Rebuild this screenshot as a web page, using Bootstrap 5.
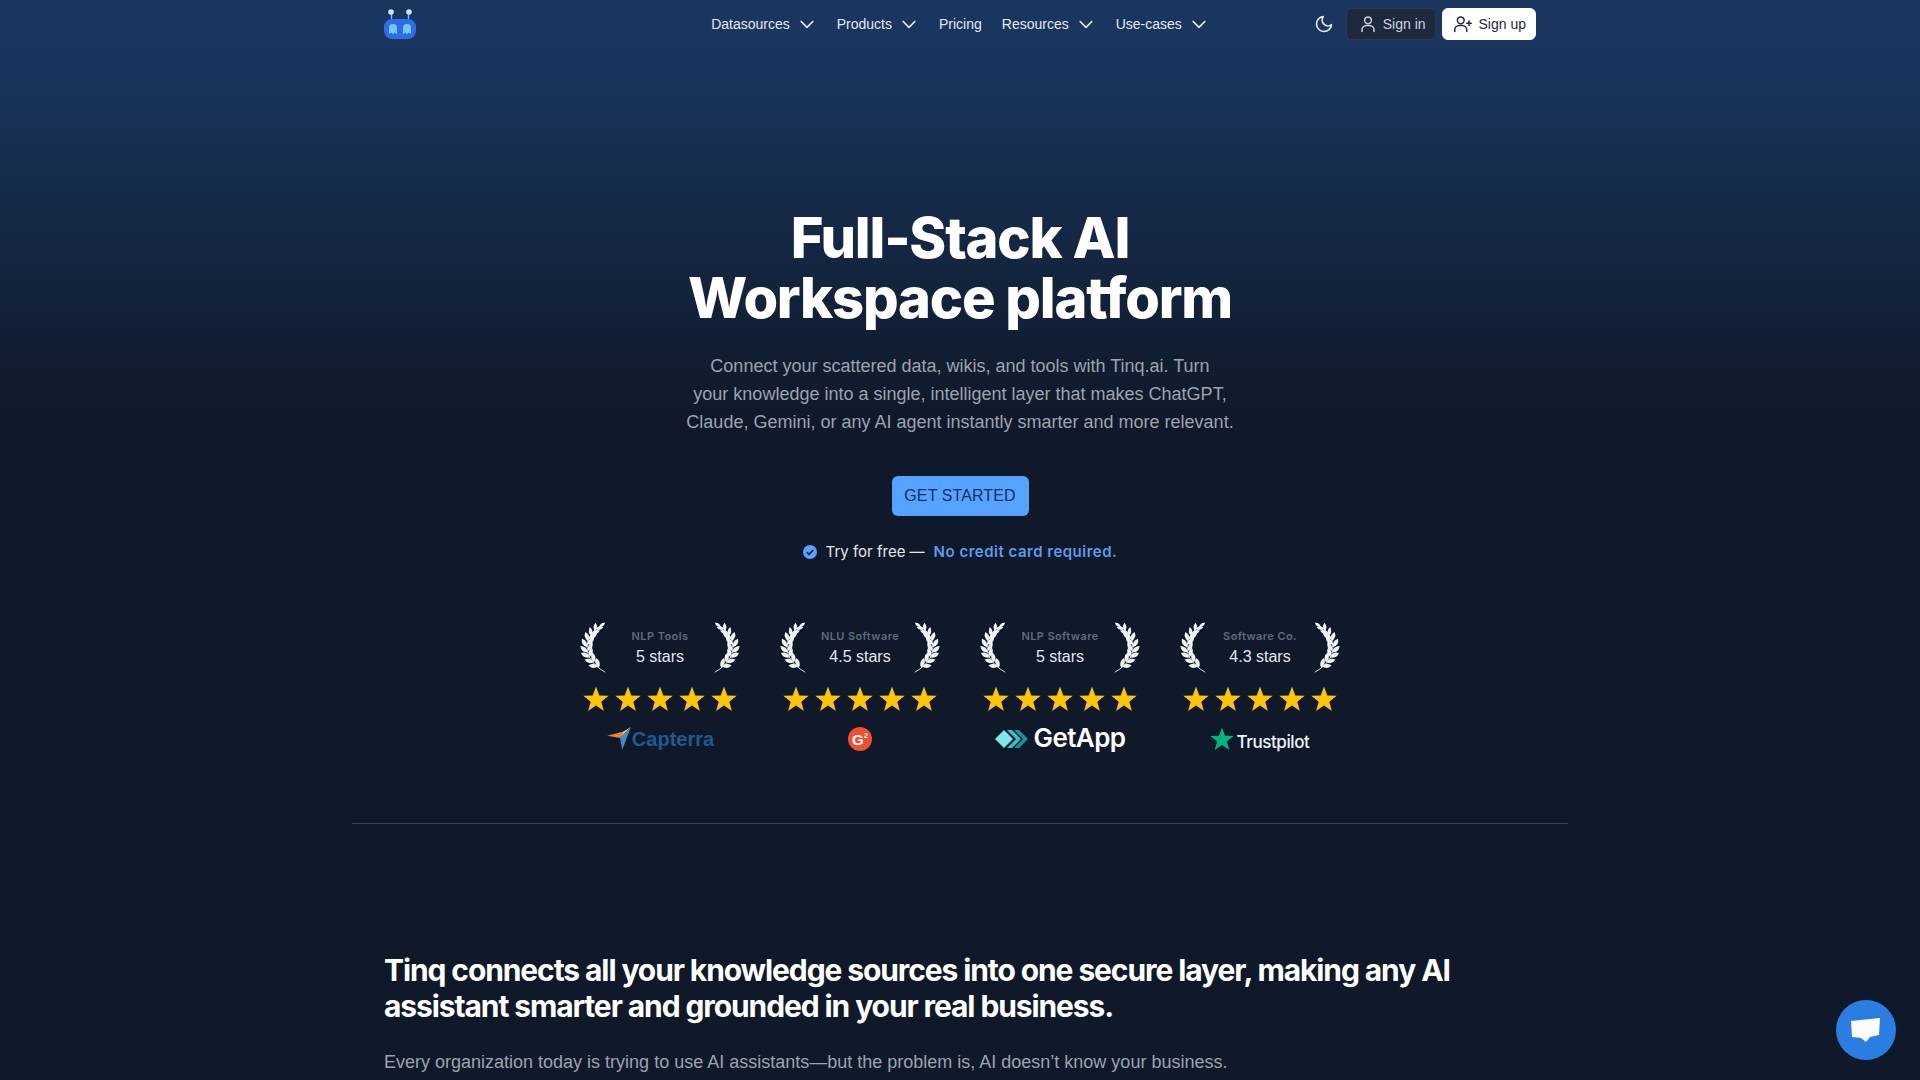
<!DOCTYPE html>
<html lang="en">
<head>
  <meta charset="UTF-8" />
  <meta name="viewport" content="width=device-width, initial-scale=1.0">
  <title>Tinq.ai</title>
  <link href="https://cdn.jsdelivr.net/npm/bootstrap@5.3.0/dist/css/bootstrap.min.css" rel="stylesheet">
  <style>
    html, body { height: 1080px; overflow: hidden; }
    body {
      font-family: "Liberation Sans", Arial, sans-serif;
      color: #e2e8f0;
      background: #0f1929 linear-gradient(180deg, #1a365f 0, #1a365f 50px, #0f1929 420px) no-repeat;
    }
    .page-wrap { width: 1216px; margin: 0 auto; }
    .top-nav { height: 48px; padding: 0 32px; }
    .side-slot { flex: 1 1 0; }
    .top-link { color: #e2e8f0; font-size: 14px; text-decoration: none; }
    .top-link svg { margin-left: 7px; }
    .nav-links { gap: 20px; }
    .btn-signin, .btn-signup {
      height: 32px; font-size: 14px; border-radius: 6px;
      display: inline-flex; align-items: center; gap: 6px;
    }
    .btn-signin { background: #1e293b; border: 1px solid #2b3a4f; color: #cbd5e1; padding: 0 9px 0 12px; margin-right: -2px; }
    .btn-signup { background: #fff; border: 1px solid #fff; color: #1e293b; padding: 0 9px 0 10px; }
    .btn-signin:hover { background: #1e293b; color: #cbd5e1; }
    .btn-signup:hover { background: #fff; color: #1e293b; }
    .hero { padding-top: 160px; text-align: center; }
    .hero-title {
      font-family: Inter, sans-serif; font-weight: 800; font-size: 56px; line-height: 60px;
      letter-spacing: -1.2px; color: #fff; margin: 0;
    }
    .hero-text { margin: 24px auto 0; font-size: 18px; line-height: 28px; color: #9ca3af; }
    .btn-start {
      margin-top: 40px; height: 40px; width: 137px; padding: 0; font-size: 16px; border-radius: 6px;
      background: #55a3ff; border: 0; color: #14305f; letter-spacing: .1px;
    }
    .btn-start:hover { background: #55a3ff; color: #14305f; }
    .free-line { margin-top: 24px; height: 24px; font-family: Inter, sans-serif; font-size: 15px; color: #e5e7eb; gap: 9px; }
    .free-line b { font-weight: 600; color: #5b9cf0; letter-spacing: .5px; }
    .award-row { margin-top: 56px; gap: 40px; }
    .award { width: 160px; }
    .award-head { height: 55px; }
    .award-label { font-family: Inter, sans-serif; font-weight: 600; font-size: 11px; letter-spacing: .4px; color: #5f6b7d; line-height: 14px; margin-top: 9px; }
    .award-score { font-size: 16px; line-height: 24px; color: #e2e8f0; margin-top: 2px; }
    .laurel-flip { transform: scaleX(-1); }
    .star-row { gap: 6px; margin-top: 11px; }
    .logo-slot { height: 26px; margin-top: 14px; }
    .capterra-word { font-weight: 700; font-size: 20px; color: #1d5a8f; line-height: 24px; }
    .g2-badge {
      width: 24px; height: 24px; border-radius: 50%; background: #f0502f; color: #fff;
      font-weight: 700; font-size: 15px; line-height: 25px; position: relative; text-align: left; padding-left: 4px;
    }
    .g2-badge sup { position: absolute; top: 5px; left: 16px; font-size: 7px; line-height: 7px; }
    .getapp-word { font-family: Inter, sans-serif; font-weight: 600; font-size: 26px; line-height: 26px; color: #fff; margin-left: 6px; margin-top: -2px; letter-spacing: -.6px; }
    .trust-word { font-family: Inter, sans-serif; font-weight: 500; font-size: 17px; color: #f1f5f9; line-height: 22px; margin-left: 2px; margin-top: 6px; letter-spacing: -.4px; }
    .divider { height: 1px; background: #2b4260; margin-top: 71px; }
    .intro { padding: 128px 32px 0; }
    .intro-title { font-family: Inter, sans-serif; font-weight: 700; font-size: 30px; line-height: 36px; letter-spacing: -1.1px; color: #fff; margin: 0; }
    .intro-text { margin: 24px 0 0; font-size: 18px; line-height: 28px; color: #9ca3af; }
    .chat-btn {
      position: fixed; right: 24px; bottom: 20px; width: 60px; height: 60px; border-radius: 50%;
      background: #2a7de1; border: 0;
    }
  </style>
</head>
<body>
  <!-- shared shapes -->
  <svg width="0" height="0" class="position-absolute">
    <symbol id="laurel" viewBox="-3 -1 29 56">
      <path d="M25 54.5 C12 47 5 38 5 27 C5 16 11 8 21 2" fill="none" stroke="#f1f5f9" stroke-width="1"/>
      <g fill="#f1f5f9">
        <path d="M-5.5 0Q0-4.8 5.5 0Q0 4.8-5.5 0z" transform="translate(12 47.5) rotate(5)"/>
        <path d="M-5.5 0Q0-4.8 5.5 0Q0 4.8-5.5 0z" transform="translate(7.4 42) rotate(13)"/>
        <path d="M-5.5 0Q0-4.8 5.5 0Q0 4.8-5.5 0z" transform="translate(16.5 44) rotate(72)"/>
        <path d="M-5.5 0Q0-4.8 5.5 0Q0 4.8-5.5 0z" transform="translate(11.8 38) rotate(80)"/>
        <path d="M-5.5 0Q0-4.8 5.5 0Q0 4.8-5.5 0z" transform="translate(3 35.5) rotate(25)"/>
        <path d="M-5.5 0Q0-4.8 5.5 0Q0 4.8-5.5 0z" transform="translate(9 32) rotate(100)"/>
        <path d="M-5.5 0Q0-4.8 5.5 0Q0 4.8-5.5 0z" transform="translate(1.5 29) rotate(42)"/>
        <path d="M-5.5 0Q0-4.8 5.5 0Q0 4.8-5.5 0z" transform="translate(8.4 26) rotate(117)"/>
        <path d="M-5.5 0Q0-4.8 5.5 0Q0 4.8-5.5 0z" transform="translate(2 22) rotate(58)"/>
        <path d="M-5.5 0Q0-4.8 5.5 0Q0 4.8-5.5 0z" transform="translate(9 20) rotate(133)"/>
        <path d="M-5.5 0Q0-4.8 5.5 0Q0 4.8-5.5 0z" transform="translate(4.8 15) rotate(70)"/>
        <path d="M-5.5 0Q0-4.8 5.5 0Q0 4.8-5.5 0z" transform="translate(11.2 14.6) rotate(148)"/>
        <path d="M-5 0Q0-4.2 5 0Q0 4.2-5 0z" transform="translate(8.8 9) rotate(82)"/>
        <path d="M-5 0Q0-4.2 5 0Q0 4.2-5 0z" transform="translate(14.6 9.8) rotate(160)"/>
        <path d="M-4.5 0Q0-3.8 4.5 0Q0 3.8-4.5 0z" transform="translate(14 4) rotate(95)"/>
        <path d="M-4.5 0Q0-3.8 4.5 0Q0 3.8-4.5 0z" transform="translate(18.6 5.6) rotate(165)"/>
        <path d="M-4 0Q0-3.4 4 0Q0 3.4-4 0z" transform="translate(21.8 1.6) rotate(145)"/>
      </g>
    </symbol>
    <symbol id="star" viewBox="0 0 26 26">
      <path fill="#fdc40c" d="M13 .5l3.3 8.9 9.4.4-7.4 5.9 2.6 9.3L13 19.4l-7.9 5.6 2.6-9.3L.3 9.8l9.4-.4z"/>
    </symbol>
    <symbol id="chev" viewBox="0 0 24 24">
      <path d="M5 9l7 7 7-7" fill="none" stroke="currentColor" stroke-width="2" stroke-linecap="round" stroke-linejoin="round"/>
    </symbol>
  </svg>

  <div class="page-wrap">
    <nav class="top-nav d-flex align-items-center">
      <div class="side-slot">
        <svg width="32" height="32" viewBox="0 0 32 32" class="d-block">
          <path d="M7.5 5v8M24.5 5v8" stroke="#7fb0f5" stroke-width="1.4"/>
          <circle cx="7" cy="4" r="2.8" fill="#cfe3ff"/><circle cx="25" cy="4" r="2.8" fill="#cfe3ff"/>
          <rect x="0" y="11" width="32" height="20" rx="8" fill="#2a6fe8"/>
          <path d="M5 26v-6a4 4 0 0 1 8 0v6l-2-1.4-2 1.4-2-1.4z M19 26v-6a4 4 0 0 1 8 0v6l-2-1.4-2 1.4-2-1.4z" fill="#7cc4ff"/>
        </svg>
      </div>
      <div class="nav-links d-flex align-items-center">
        <a href="#" class="top-link d-flex align-items-center">Datasources <svg width="20" height="20"><use href="#chev"/></svg></a>
        <a href="#" class="top-link d-flex align-items-center">Products <svg width="20" height="20"><use href="#chev"/></svg></a>
        <a href="#" class="top-link">Pricing</a>
        <a href="#" class="top-link d-flex align-items-center">Resources <svg width="20" height="20"><use href="#chev"/></svg></a>
        <a href="#" class="top-link d-flex align-items-center">Use-cases <svg width="20" height="20"><use href="#chev"/></svg></a>
      </div>
      <div class="side-slot d-flex align-items-center justify-content-end gap-2">
        <svg width="20" height="20" viewBox="0 0 24 24" fill="none" stroke="#e2e8f0" stroke-width="2" stroke-linecap="round" stroke-linejoin="round" class="me-1"><path d="M21 12.8A9 9 0 1 1 11.2 3a7 7 0 0 0 9.8 9.8z"/></svg>
        <button class="btn btn-signin" type="button">
          <svg width="18" height="18" viewBox="0 0 24 24" fill="none" stroke="currentColor" stroke-width="2" stroke-linecap="round"><circle cx="12" cy="7" r="4.5"/><path d="M4 22v-2a6 6 0 0 1 6-6h4a6 6 0 0 1 6 6v2"/></svg>
          Sign in
        </button>
        <button class="btn btn-signup" type="button">
          <svg width="20" height="18" viewBox="0 0 26 24" fill="none" stroke="currentColor" stroke-width="2" stroke-linecap="round"><circle cx="10" cy="7" r="4.5"/><path d="M2 22v-2a6 6 0 0 1 6-6h4a6 6 0 0 1 6 6v2M21 8v6M18 11h6"/></svg>
          Sign up
        </button>
      </div>
    </nav>

    <section class="hero">
      <h1 class="hero-title">Full-Stack AI<br>Workspace platform</h1>
      <p class="hero-text">Connect your scattered data, wikis, and tools with Tinq.ai. Turn<br>your knowledge into a single, intelligent layer that makes ChatGPT,<br>Claude, Gemini, or any AI agent instantly smarter and more relevant.</p>
      <button class="btn btn-start" type="button">GET STARTED</button>
      <div class="free-line d-flex align-items-center justify-content-center">
        <svg width="14" height="14" viewBox="0 0 14 14"><circle cx="7" cy="7" r="7" fill="#55a3ff"/><path d="M3.8 7.2l2.2 2.2 4.2-4.4" fill="none" stroke="#0f1929" stroke-width="1.6"/></svg>
        <span>Try for free —</span>
        <b>No credit card required.</b>
      </div>

      <div class="award-row d-flex justify-content-center">
        <div class="award">
          <div class="award-head d-flex justify-content-between">
            <svg width="26" height="55"><use href="#laurel"/></svg>
            <div><div class="award-label">NLP Tools</div><div class="award-score">5 stars</div></div>
            <svg width="26" height="55" class="laurel-flip"><use href="#laurel"/></svg>
          </div>
          <div class="star-row d-flex justify-content-center">
            <svg width="26" height="26"><use href="#star"/></svg><svg width="26" height="26"><use href="#star"/></svg><svg width="26" height="26"><use href="#star"/></svg><svg width="26" height="26"><use href="#star"/></svg><svg width="26" height="26"><use href="#star"/></svg>
          </div>
          <div class="logo-slot d-flex align-items-center justify-content-center">
            <svg width="26" height="26" viewBox="0 0 24 24"><path fill="#f47b3a" d="M1 9l15-4-3 6z"/><path fill="#f5c14e" d="M16 5l7-4-10 10z"/><path fill="#3d8ecb" d="M23 1L13 11l2 11z"/></svg>
            <span class="capterra-word">Capterra</span>
          </div>
        </div>
        <div class="award">
          <div class="award-head d-flex justify-content-between">
            <svg width="26" height="55"><use href="#laurel"/></svg>
            <div><div class="award-label">NLU Software</div><div class="award-score">4.5 stars</div></div>
            <svg width="26" height="55" class="laurel-flip"><use href="#laurel"/></svg>
          </div>
          <div class="star-row d-flex justify-content-center">
            <svg width="26" height="26"><use href="#star"/></svg><svg width="26" height="26"><use href="#star"/></svg><svg width="26" height="26"><use href="#star"/></svg><svg width="26" height="26"><use href="#star"/></svg><svg width="26" height="26"><use href="#star"/></svg>
          </div>
          <div class="logo-slot d-flex align-items-center justify-content-center">
            <div class="g2-badge">G<sup>2</sup></div>
          </div>
        </div>
        <div class="award">
          <div class="award-head d-flex justify-content-between">
            <svg width="26" height="55"><use href="#laurel"/></svg>
            <div><div class="award-label">NLP Software</div><div class="award-score">5 stars</div></div>
            <svg width="26" height="55" class="laurel-flip"><use href="#laurel"/></svg>
          </div>
          <div class="star-row d-flex justify-content-center">
            <svg width="26" height="26"><use href="#star"/></svg><svg width="26" height="26"><use href="#star"/></svg><svg width="26" height="26"><use href="#star"/></svg><svg width="26" height="26"><use href="#star"/></svg><svg width="26" height="26"><use href="#star"/></svg>
          </div>
          <div class="logo-slot d-flex align-items-center justify-content-center">
            <svg width="33" height="20" viewBox="0 0 33 20"><path fill="#7fe6e6" d="M0 10L9 1l9 9-9 9z"/><path fill="#35c2c8" d="M12 1h5l9 9-9 9h-5l9-9z"/><path fill="#1f8f9a" d="M19 1h5l9 9-9 9h-5l9-9z"/></svg>
            <span class="getapp-word">GetApp</span>
          </div>
        </div>
        <div class="award">
          <div class="award-head d-flex justify-content-between">
            <svg width="26" height="55"><use href="#laurel"/></svg>
            <div><div class="award-label">Software Co.</div><div class="award-score">4.3 stars</div></div>
            <svg width="26" height="55" class="laurel-flip"><use href="#laurel"/></svg>
          </div>
          <div class="star-row d-flex justify-content-center">
            <svg width="26" height="26"><use href="#star"/></svg><svg width="26" height="26"><use href="#star"/></svg><svg width="26" height="26"><use href="#star"/></svg><svg width="26" height="26"><use href="#star"/></svg><svg width="26" height="26"><use href="#star"/></svg>
          </div>
          <div class="logo-slot d-flex align-items-center justify-content-center">
            <svg width="24" height="24" viewBox="0 0 26 26"><path fill="#00b67a" d="M13 .5l3.3 8.9 9.4.4-7.4 5.9 2.6 9.3L13 19.4l-7.9 5.6 2.6-9.3L.3 9.8l9.4-.4z"/></svg>
            <span class="trust-word">Trustpilot</span>
          </div>
        </div>
      </div>
    </section>

    <div class="divider"></div>

    <section class="intro">
      <h2 class="intro-title">Tinq connects all your knowledge sources into one secure layer, making any AI assistant smarter and grounded in your real business.</h2>
      <p class="intro-text">Every organization today is trying to use AI assistants—but the problem is, AI doesn’t know your business.</p>
    </section>
  </div>

  <button class="chat-btn" type="button" aria-label="Chat">
    <svg width="32" height="26" viewBox="0 0 32 26" class="d-block mx-auto"><path fill="#fff" d="M1 4l29-3-1 17-9 2-4 5-5-4-9-1z"/></svg>
  </button>

  <script src="https://cdn.jsdelivr.net/npm/bootstrap@5.3.0/dist/js/bootstrap.bundle.min.js"></script>
</body>
</html>
